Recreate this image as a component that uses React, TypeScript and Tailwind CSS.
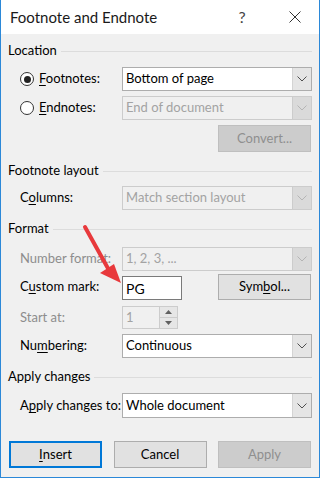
import type { ReactNode } from "react"

const font = { fontFamily: 'Lato, "Liberation Sans", Arial, sans-serif' }

function Chevron({ disabled }: { disabled?: boolean }) {
  return (
    <svg width="10" height="6" viewBox="0 0 10 6" className="block">
      <path d="M0.5 0.5 L5 5 L9.5 0.5" fill="none" stroke={disabled ? "#b4b4b4" : "#505050"} strokeWidth="1" />
    </svg>
  )
}

function Select({ value, disabled }: { value: string; disabled?: boolean }) {
  return (
    <div
      className={
        "flex h-full w-[190px] border " +
        (disabled ? "border-[#cccccc] bg-[#f0f0f0] text-[#a3a3a3]" : "border-[#adadad] bg-white text-black")
      }
    >
      <div className="flex flex-1 items-center pl-[3px] text-[13px]">{value}</div>
      <div
        className={
          "flex w-[19px] items-center justify-center border-l " +
          (disabled ? "border-[#cccccc] bg-[#dadada]" : "border-[#d4d4d4] bg-[#e5e5e5]")
        }
      >
        <Chevron disabled={disabled} />
      </div>
    </div>
  )
}

function Heading({ children, mt }: { children: ReactNode; mt: string }) {
  return (
    <div className={"flex h-[18px] items-center " + mt}>
      <span className="text-[13px] text-black">{children}</span>
      <div className="ml-[4px] mr-0 h-px flex-1 bg-[#dcdcdc]" />
    </div>
  )
}

function Row({ label, disabled, children, mt, h = "h-[24px]" }: { label: ReactNode; disabled?: boolean; children: ReactNode; mt: string; h?: string }) {
  return (
    <div className={"flex items-center " + h + " " + mt}>
      <div className={"w-[114px] shrink-0 whitespace-nowrap pl-[12px] text-[13px] " + (disabled ? "text-[#8d8d8d]" : "text-black")}>{label}</div>
      {children}
    </div>
  )
}

function Button({ children, variant = "normal", w = "w-[93px]" }: { children: ReactNode; variant?: "normal" | "default" | "disabled"; w?: string }) {
  const cls =
    variant === "default"
      ? "border-2 border-[#0078d7] bg-[#e1e1e1] text-black"
      : variant === "disabled"
        ? "border border-[#bfbfbf] bg-[#cccccc] text-[#8f8f8f]"
        : "border border-[#adadad] bg-[#e1e1e1] text-black"
  return <div className={"flex h-full items-center justify-center text-[13px] " + w + " " + cls}>{children}</div>
}

function Radio({ checked }: { checked?: boolean }) {
  return (
    <div className="flex h-[14px] w-[14px] items-center justify-center rounded-full border border-[#333333] bg-white">
      {checked && <div className="h-[7px] w-[7px] rounded-full bg-[#222222]" />}
    </div>
  )
}

export default function App() {
  return (
    <div style={font} className="relative h-[478px] w-[320px] overflow-hidden">
      <div className="flex h-full w-full flex-col border-x border-b border-[#2b88d8] bg-[#f0f0f0]">
        {/* title bar */}
        <div className="flex h-[34px] shrink-0 items-center bg-white pl-[9px]">
          <span className="text-[15px] text-[#1a1a1a]">Footnote and Endnote</span>
          <span className="ml-auto w-[20px] text-center text-[16px] text-[#444]">?</span>
          <svg width="12" height="12" viewBox="0 0 12 12" className="ml-[37px] mr-[18px]">
            <path d="M0.5 0.5 L11.5 11.5 M11.5 0.5 L0.5 11.5" stroke="#333" strokeWidth="1" />
          </svg>
        </div>

        <div className="flex flex-col px-[7px]">
          <Heading mt="mt-[8px]">Location</Heading>

          <div className="mt-[7px] flex h-[24px] items-center">
            <div className="flex w-[114px] items-center pl-[12px]">
              <Radio checked />
              <span className="ml-[5px] text-[13px] text-black">
                <u className="underline-offset-2">F</u>ootnotes:
              </span>
            </div>
            <Select value="Bottom of page" />
          </div>

          <div className="mt-[5px] flex h-[24px] items-center">
            <div className="flex w-[114px] items-center pl-[12px]">
              <Radio />
              <span className="ml-[5px] text-[13px] text-black">
                <u className="underline-offset-2">E</u>ndnotes:
              </span>
            </div>
            <Select value="End of document" disabled />
          </div>

          <div className="mt-[5px] flex h-[27px] justify-end pr-px">
            <Button variant="disabled">Convert...</Button>
          </div>

          <Heading mt="mt-[10px]">Footnote layout</Heading>

          <Row
            mt="mt-[6px]"
            label={
              <>
                C<u className="underline-offset-2">o</u>lumns:
              </>
            }
          >
            <Select value="Match section layout" disabled />
          </Row>

          <Heading mt="mt-[10px]">Format</Heading>

          <Row mt="mt-[9px]" label="Number format:" disabled>
            <Select value="1, 2, 3, ..." disabled />
          </Row>

          <Row
            mt="mt-[3px]"
            h="h-[26px]"
            label={
              <>
                C<u className="underline-offset-2">u</u>stom mark:
              </>
            }
          >
            <div className="flex h-[24px] w-[60px] items-center self-end border border-[#7a7a7a] bg-white pl-[3px] text-[14px] text-black">
              PG
            </div>
            <div className="ml-auto flex h-full pr-px">
              <Button>
                Sym<u className="underline-offset-2">b</u>ol...
              </Button>
            </div>
          </Row>

          <Row mt="mt-[6px]" h="h-[23px]" label="Start at:" disabled>
            <div className="flex h-full w-[56px] border border-[#cccccc] bg-[#f0f0f0]">
              <div className="flex flex-1 items-center pl-[3px] text-[13px] text-[#a3a3a3]">1</div>
              <div className="flex w-[18px] flex-col border-l border-[#cccccc]">
                <div className="flex flex-1 items-center justify-center border-b border-[#cccccc] bg-[#e6e6e6]">
                  <svg width="7" height="4" viewBox="0 0 7 4">
                    <path d="M0 4 L3.5 0 L7 4 Z" fill="#606060" />
                  </svg>
                </div>
                <div className="flex flex-1 items-center justify-center bg-[#e6e6e6]">
                  <svg width="7" height="4" viewBox="0 0 7 4">
                    <path d="M0 0 L3.5 4 L7 0 Z" fill="#606060" />
                  </svg>
                </div>
              </div>
            </div>
          </Row>

          <Row
            mt="mt-[5px]"
            label={
              <>
                Nu<u className="underline-offset-2">m</u>bering:
              </>
            }
          >
            <Select value="Continuous" />
          </Row>

          <Heading mt="mt-[10px]">Apply changes</Heading>

          <Row
            mt="mt-[7px]"
            h="h-[25px]"
            label={
              <>
                A<u className="underline-offset-2">p</u>ply changes to:
              </>
            }
          >
            <Select value="Whole document" />
          </Row>

          <div className="mt-[23px] flex h-[27px] items-center justify-between pl-px pr-px">
            <Button variant="default">
              <u className="underline-offset-2">I</u>nsert
            </Button>
            <Button>Cancel</Button>
            <Button variant="disabled">Apply</Button>
          </div>
        </div>
      </div>

      {/* red annotation arrow */}
      <svg className="absolute left-0 top-0" width="320" height="478" viewBox="0 0 320 478">
        <path d="M85 227 L110 272" stroke="#e8393c" strokeWidth="4" strokeLinecap="round" />
        <path d="M100 273 L114 264 L121 283 Z" fill="#e8393c" />
      </svg>
    </div>
  )
}
